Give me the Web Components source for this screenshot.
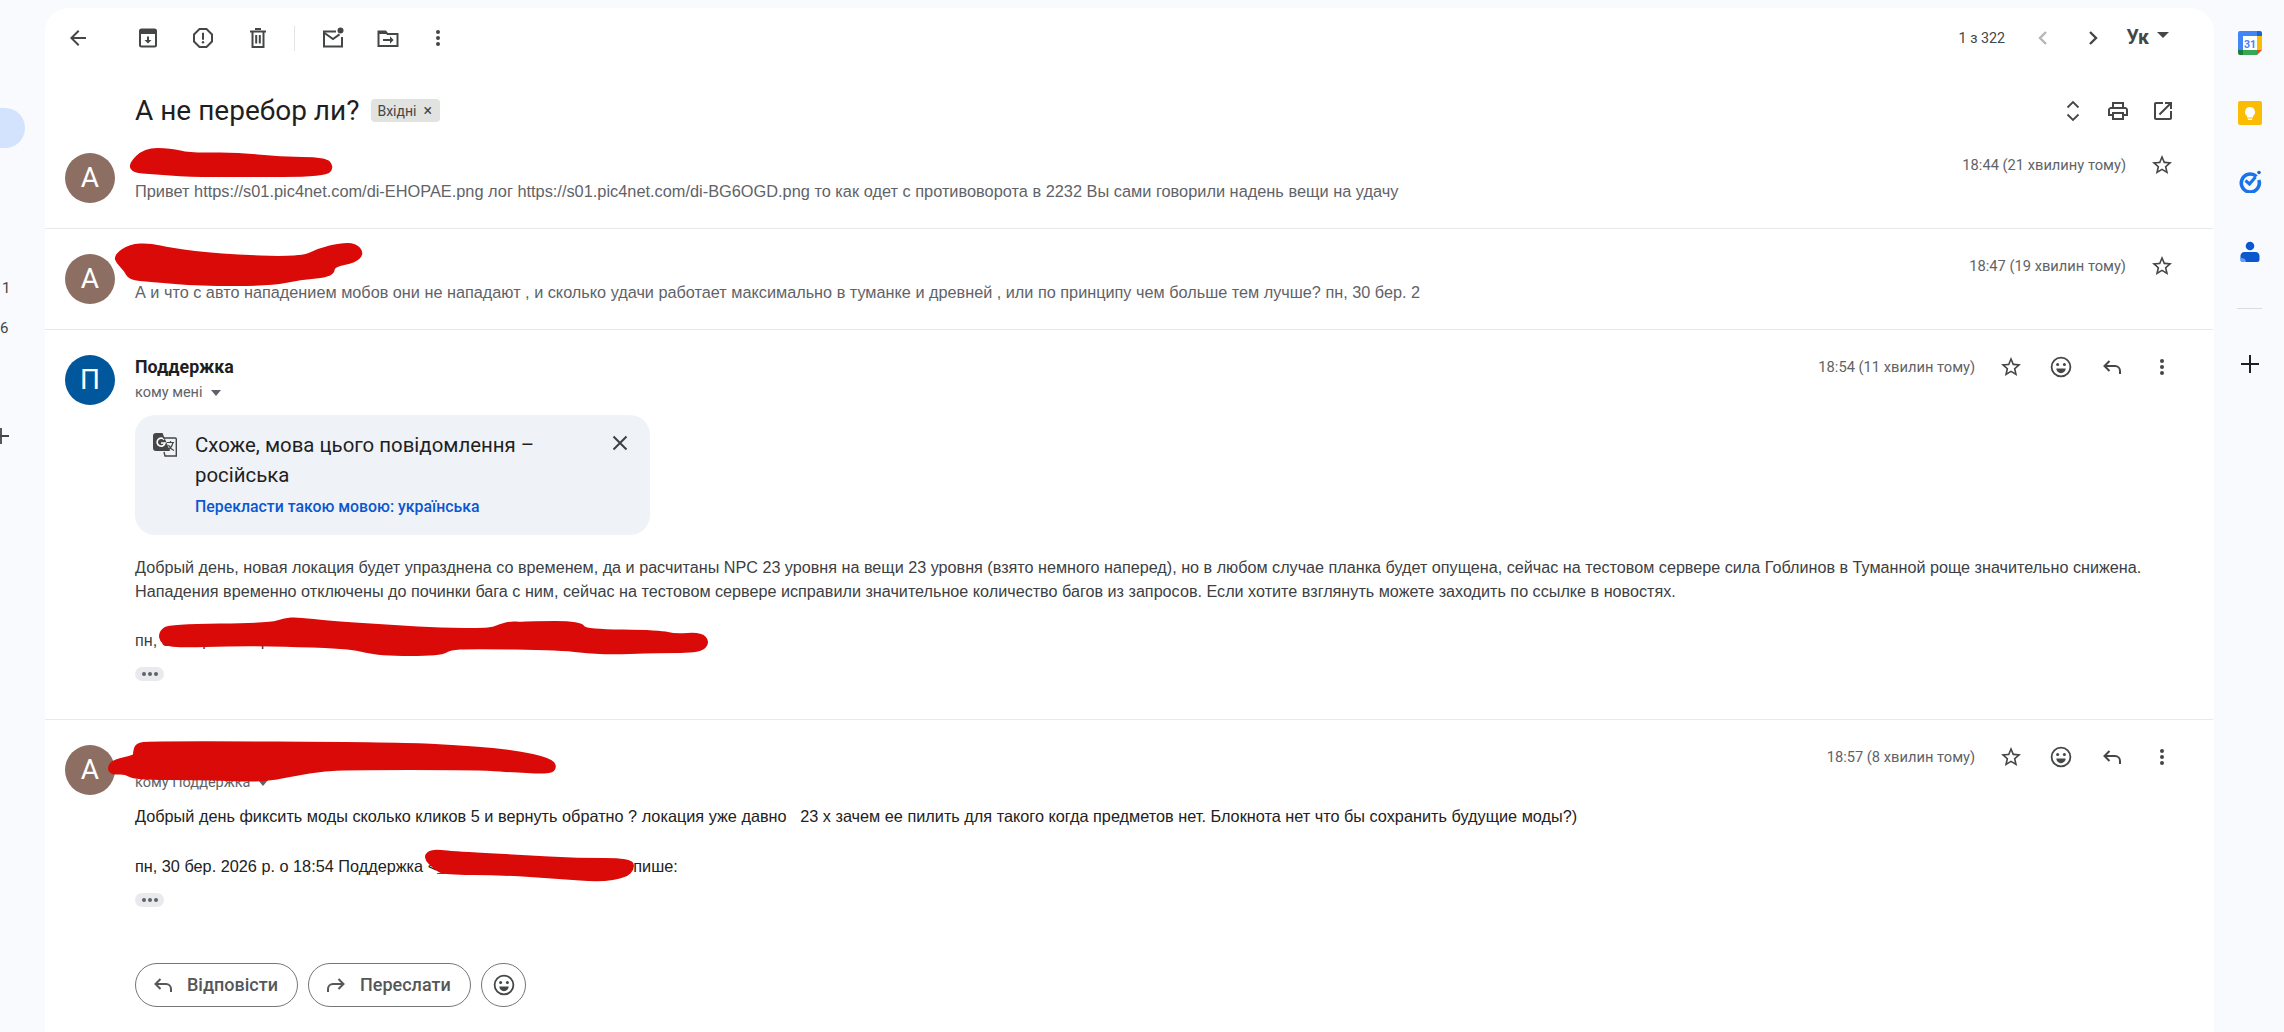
<!DOCTYPE html>
<html lang="uk">
<head>
<meta charset="utf-8">
<title>А не перебор ли?</title>
<style>
  html, body { margin: 0; height: 100%; background: #f8fafd; overflow: hidden; }
</style>
</head>
<body>
<gm-app>
  <gm-nav slot="nav"></gm-nav>

  <gm-toolbar></gm-toolbar>
  <gm-subject>А не перебор ли?</gm-subject>

  <gm-message letter="А" time="18:44 (21 хвилину тому)" collapsed>
    <gm-scribble slot="over" left="85" top="22" width="202" height="25" pts="0,15 15,0 40,0 60,5 105,4 150,9 195,9 202,17 195,25 110,25 60,25 20,22 5,21"></gm-scribble>
    Привет https://s01.pic4net.com/di-EHOPAE.png лог https://s01.pic4net.com/di-BG6OGD.png то как одет с противоворота в 2232 Вы сами говорили надень вещи на удачу
  </gm-message>

  <gm-message letter="А" time="18:47 (19 хвилин тому)" collapsed style="--preview-size: 16.25px">
    <gm-scribble slot="over" left="71" top="16" width="246" height="39" pts="0,11 14,1 34,0 54,5 104,11 184,14 204,5 224,0 239,0 246,8 239,16 217,20 216,30 184,33 154,39 84,39 34,35 14,33 10,25 2,17"></gm-scribble>
    А и что с авто нападением мобов они не нападают , и сколько удачи работает максимально в туманке и древней , или по принципу чем больше тем лучше? пн, 30 бер. 2
  </gm-message>

  <gm-message letter="П" color="#01579b" name="Поддержка" to="кому мені" time="18:54 (11 хвилин тому)">
    <gm-translate-card></gm-translate-card>
    <gm-body top="20" size="16.18">Добрый день, новая локация будет упразднена со временем, да и расчитаны NPC 23 уровня на вещи 23 уровня (взято немного наперед), но в любом случае планка будет опущена, сейчас на тестовом сервере сила Гоблинов в Туманной роще значительно снижена. Нападения временно отключены до починки бага с ним, сейчас на тестовом сервере исправили значительное количество багов из запросов. Если хотите взглянуть можете заходить по ссылке в новостях.</gm-body>
    <gm-body top="25" size="16.18">пн, 30 бер. 2026 р.<gm-gap width="222"></gm-gap><span style="color:#1155cc;text-decoration:underline">&nbsp;&nbsp;&nbsp;&nbsp;&nbsp;</span></gm-body>
    <gm-dots></gm-dots>
    <gm-scribble slot="over" left="116" top="289" width="547" height="35" pts="0,13 9,7 109,6 124,1 136,0 169,4 234,8 279,11 329,11 339,7 351,4 359,5 369,4 419,4 424,12 499,13 514,17 539,15 547,23 539,32 499,32 439,34 399,29 309,28 289,29 279,35 219,35 189,28 139,26 79,25 9,27 0,21"></gm-scribble>
  </gm-message>

  <gm-message letter="А" to="кому Поддержка" time="18:57 (8 хвилин тому)" last>
    <gm-body top="10" dark>Добрый день фиксить моды сколько кликов 5 и вернуть обратно ? локация уже давно &nbsp; 23 х зачем ее пилить для такого когда предметов нет. Блокнота нет что бы сохранить будущие моды?)</gm-body>
    <gm-body top="26" dark>пн, 30 бер. 2026 р. о 18:54 Поддержка &lt;<span style="color:#1155cc;text-decoration:underline">с</span><gm-gap width="188"></gm-gap>пише:</gm-body>
    <gm-dots></gm-dots>
    <gm-reply-bar></gm-reply-bar>
    <gm-scribble slot="over" left="64" top="23" width="446" height="37" pts="26,9 28,2 41,0 291,1 361,5 406,9 441,17 446,24 441,29 411,28 371,25 231,25 201,28 166,35 146,37 91,35 26,35 16,29 3,30 0,24 6,18 26,14"></gm-scribble>
    <gm-scribble slot="over" left="380" top="131" width="208" height="29" pts="0,6 7,0 25,2 95,6 153,9 205,9 208,17 200,25 175,29 135,26 75,22 20,22 10,17"></gm-scribble>
  </gm-message>

  <gm-rail slot="rail"></gm-rail>
</gm-app>

<script>
// all the icon paths in one place, 24 box
const ICONS = {
  back: `<path fill="currentColor" d="M20 11H7.83l5.59-5.59L12 4l-8 8 8 8 1.41-1.41L7.83 13H20v-2z"/>`,
  archive: `<g fill="none" stroke="currentColor" stroke-width="2"><rect x="4" y="3.5" width="16" height="17" rx="1.5"/></g><path fill="currentColor" d="M4 3.5h16V8H4z"/><path fill="currentColor" d="M11 10.5h2v3.5h2.5L12 17.6 8.5 14H11z"/>`,
  report: `<path fill="none" stroke="currentColor" stroke-width="2" d="M8.5 3h7L21 8.5v7L15.5 21h-7L3 15.5v-7z"/><path fill="currentColor" d="M11 6.8h2v7h-2z"/><circle cx="12" cy="16.3" r="1.2" fill="currentColor"/>`,
  trash: `<g fill="none" stroke="currentColor" stroke-width="2"><path d="M6.5 6v15h11V6"/><path d="M4 5.5h16M9 3h6"/><path d="M10.2 9v8.5M13.8 9v8.5"/></g>`,
  unread: `<g fill="none" stroke="currentColor" stroke-width="2"><path d="M15 5.5H3v15h18V11"/><path d="M3.5 7l8.5 6 6.5-4.6"/></g><circle cx="19.5" cy="4.5" r="3" fill="currentColor"/>`,
  move: `<path fill="none" stroke="currentColor" stroke-width="2" d="M2.5 5.5h7l2 2.5h10v12h-19z"/><path fill="currentColor" d="M2.5 5.500h7l2 2.500h-9z"/><path fill="currentColor" d="M7 13h7v-2.800l3.600 3.800-3.600 3.800V15H7z"/>`,
  more: `<g fill="currentColor"><circle cx="12" cy="6" r="2"/><circle cx="12" cy="12" r="2"/><circle cx="12" cy="18" r="2"/></g>`,
  left: `<path fill="none" stroke="currentColor" stroke-width="2.4" d="M15 6l-6 6 6 6"/>`,
  right: `<path fill="none" stroke="currentColor" stroke-width="2.4" d="M9 6l6 6-6 6"/>`,
  unfold: `<path fill="none" stroke="currentColor" stroke-width="1.8" d="M6.5 8.5L12 3l5.5 5.5M6.5 15.5L12 21l5.5-5.5"/>`,
  print: `<path fill="currentColor" d="M19 8h-1V3H6v5H5c-1.66 0-3 1.34-3 3v6h4v4h12v-4h4v-6c0-1.66-1.34-3-3-3zM8 5h8v3H8V5zm8 12v2H8v-4h8v2zm2-2v-2H6v2H4v-4c0-.55.45-1 1-1h14c.55 0 1 .45 1 1v4h-2z"/>`,
  open: `<path fill="currentColor" d="M19 19H5V5h7V3H5c-1.11 0-2 .9-2 2v14c0 1.1.89 2 2 2h14c1.1 0 2-.9 2-2v-7h-2v7zM14 3v2h3.59l-9.83 9.83 1.41 1.41L19 6.41V10h2V3h-7z"/>`,
  star: `<path fill="currentColor" d="M22 9.24l-7.19-.62L12 2 9.19 8.63 2 9.24l5.46 4.73L5.82 21 12 17.27 18.18 21l-1.63-7.03L22 9.24zM12 15.4l-3.76 2.27 1-4.28-3.32-2.88 4.38-.38L12 6.1l1.71 4.04 4.38.38-3.32 2.88 1 4.28L12 15.4z"/>`,
  smile: `<circle cx="12" cy="12" r="9.4" fill="none" stroke="currentColor" stroke-width="1.8"/><circle cx="8.6" cy="9.4" r="1.5" fill="currentColor"/><circle cx="15.4" cy="9.4" r="1.5" fill="currentColor"/><path fill="currentColor" d="M7.3 13.5h9.4a4.7 4.7 0 0 1-9.4 0z"/>`,
  reply: `<path fill="none" stroke="currentColor" stroke-width="2" d="M9.5 6L4.5 11l5 5M4.5 11H15a5 5 0 0 1 5 5v3"/>`,
  forward: `<path fill="none" stroke="currentColor" stroke-width="2" d="M14.5 6l5 5-5 5M19.5 11H9a5 5 0 0 0-5 5v3"/>`,
  close: `<path fill="none" stroke="currentColor" stroke-width="2" d="M5.5 5.5l13 13M18.5 5.5l-13 13"/>`,
  translate: `<path fill="currentColor" d="M3 0h6.5L17 18H3a3 3 0 0 1-3-3V3a3 3 0 0 1 3-3z"/><path fill="none" stroke="#fff" stroke-width="1.6" d="M11.2 6.6A4 4 0 1 0 12 10H8"/><path fill="none" stroke="currentColor" stroke-width="1.4" d="M10 5h12.3a1 1 0 0 1 1 1v17H12l-1-4"/><path fill="none" stroke="currentColor" stroke-width="1.2" d="M14 9.5h7M17.5 8v1.5M20 9.5c-1 4-3 6.5-6 8M15.5 12c1 2.500 3 4.500 5.500 5.500"/>`
};

// plain svg icon, <gm-icon name="star" size="24">
class GmIcon extends HTMLElement {
  connectedCallback() {
    const size = this.getAttribute("size") || 24;
    this.attachShadow({ mode: "open" }).innerHTML = `
      <style>
        :host { display: inline-flex; width: ${size}px; height: ${size}px; flex: none; color: inherit; }
        svg { width: 100%; height: 100%; display: block; }
      </style>
      <svg viewBox="0 0 24 24">${ICONS[this.getAttribute("name")]}</svg>`;
  }
}
customElements.define("gm-icon", GmIcon);

var template_app = document.createElement("template");
template_app.innerHTML = `
<style>
  :host { display: flex; height: 100vh; overflow: hidden; background: #f8fafd; font-family: Roboto, "Liberation Sans", sans-serif; }
  .panel { flex: 1; min-width: 0; margin-top: 8px; background: #fff; border-radius: 24px 24px 0 0; overflow: hidden; }
</style>
<slot name="nav"></slot>
<div class="panel"><slot></slot></div>
<slot name="rail"></slot>
`;
class GmApp extends HTMLElement {
  constructor() {
    super();
    this.attachShadow({ mode: "open" });
  }
  connectedCallback() {
    this.shadowRoot.appendChild(template_app.content.cloneNode(true));
  }
}
customElements.define("gm-app", GmApp);

// what is left of the left sidebar, mostly cut off
var template_nav = document.createElement("template");
template_nav.innerHTML = `
<style>
  :host { display: block; width: 45px; flex: none; overflow: hidden; color: #444746; font: 15px/20px Roboto, sans-serif; }
  .pill { width: 25px; height: 40px; margin-top: 108px; background: #d3e3fd; border-radius: 0 20px 20px 0; }
  .num { padding-left: 2px; height: 20px; }
  .one { margin-top: 130px; }
  .six { margin-top: 20px; padding-left: 0; }
  .plus { margin: 87px 0 0 -10px; }
</style>
<div class="pill"></div>
<div class="num one">1</div>
<div class="num six">6</div>
<div class="plus"><svg width="22" height="22" viewBox="0 0 22 22"><path d="M11 3v16M3 11h16" stroke="#444746" stroke-width="1.8"/></svg></div>
`;
class GmNav extends HTMLElement {
  constructor() { super(); this.attachShadow({ mode: "open" }); }
  connectedCallback() { this.shadowRoot.appendChild(template_nav.content.cloneNode(true)); }
}
customElements.define("gm-nav", GmNav);

var template_toolbar = document.createElement("template");
template_toolbar.innerHTML = `
<style>
  :host { display: flex; align-items: center; height: 60px; padding: 0 45.5px 0 5px; color: #444746; }
  .btn { width: 55px; height: 40px; display: flex; align-items: center; justify-content: center; flex: none; }
  .back { margin-right: 15px; }
  .sep { width: 1px; height: 25px; background: #e3e5e8; margin: 0 10px 0 9px; }
  .short { width: 45px; }
  .count { margin-left: auto; font-size: 14.3px; color: #444746; }
  .pager { width: 24px; display: flex; margin-left: 26px; }
  .prev { color: #b4b6b8; }
  .uk { margin-left: 21.5px; font: 700 19.5px/24px Roboto, sans-serif; color: #444746; }
  .caret { width: 0; height: 0; margin: -6px 0 0 7.5px; border: 6px solid transparent; border-top-color: #444746; border-bottom: 0; }
</style>
<div class="btn back"><gm-icon name="back"></gm-icon></div>
<div class="btn"><gm-icon name="archive"></gm-icon></div>
<div class="btn"><gm-icon name="report"></gm-icon></div>
<div class="btn"><gm-icon name="trash"></gm-icon></div>
<div class="sep"></div>
<div class="btn"><gm-icon name="unread"></gm-icon></div>
<div class="btn"><gm-icon name="move"></gm-icon></div>
<div class="btn short"><gm-icon name="more"></gm-icon></div>
<span class="count">1 з 322</span>
<div class="pager prev"><gm-icon name="left"></gm-icon></div>
<div class="pager"><gm-icon name="right"></gm-icon></div>
<span class="uk">Ук</span>
<div class="caret"></div>
`;
class GmToolbar extends HTMLElement {
  constructor() { super(); this.attachShadow({ mode: "open" }); }
  connectedCallback() { this.shadowRoot.appendChild(template_toolbar.content.cloneNode(true)); }
}
customElements.define("gm-toolbar", GmToolbar);

var template_subject = document.createElement("template");
template_subject.innerHTML = `
<style>
  :host { display: flex; align-items: center; height: 32px; padding: 27px 39px 1px 90px; color: #1f1f1f; }
  h1 { margin: 0; font: 400 28px/32px Roboto, sans-serif; }
  .chip { display: flex; align-items: center; gap: 7px; height: 23px; margin: -1px 0 0 12px; padding: 0 8px 0 6px; background: #e1e3e1; border-radius: 4px; color: #444746; font-size: 14px; }
  .x { font-size: 16px; line-height: 16px; }
  .tools { margin-left: auto; display: flex; gap: 21px; color: #444746; }
</style>
<h1><slot></slot></h1>
<div class="chip"><span>Вхідні</span><span class="x">×</span></div>
<div class="tools">
  <gm-icon name="unfold"></gm-icon>
  <gm-icon name="print"></gm-icon>
  <gm-icon name="open"></gm-icon>
</div>
`;
class GmSubject extends HTMLElement {
  constructor() { super(); this.attachShadow({ mode: "open" }); }
  connectedCallback() { this.shadowRoot.appendChild(template_subject.content.cloneNode(true)); }
}
customElements.define("gm-subject", GmSubject);

var template_message = document.createElement("template");
template_message.innerHTML = `
<style>
  :host { display: flex; position: relative; gap: 20px; padding: 25px 39px 38px 20px; border-bottom: 1px solid #e6e8ec; margin-right: 1px; }
  :host([collapsed]) { padding-bottom: 0; height: 75px; }
  :host([last]) { border-bottom: 0; }
  .avatar { width: 50px; height: 50px; border-radius: 50%; flex: none; display: flex; align-items: center; justify-content: center; color: #fff; font: 400 28px/50px Roboto, sans-serif; background: #8d6e63; }
  .main { flex: 1; min-width: 0; }
  .head { display: flex; justify-content: space-between; align-items: flex-start; height: 25px; }
  .name { font: 700 17.8px/24px Roboto, sans-serif; color: #1f1f1f; }
  .side { display: flex; align-items: center; height: 24px; color: #444746; }
  .time { font-size: 14.7px; color: #5f6368; margin-right: 24px; }
  .side gm-icon + gm-icon { margin-left: 26.3px; }
  .to { display: flex; align-items: center; height: 24px; font-size: 14.5px; color: #5f6368; }
  .to i { margin: 1px 0 0 8px; border: 5px solid transparent; border-top: 6px solid #5f6368; border-bottom: 0; }
  .preview { padding-top: 1px; font: var(--preview-size, 16.35px)/24px "Liberation Sans", Arial, sans-serif; color: #5f6368; white-space: nowrap; }
</style>
<div class="avatar"></div>
<div class="main">
  <div class="head">
    <div class="name"></div>
    <div class="side"><span class="time"></span></div>
  </div>
  <div class="content"><slot></slot></div>
</div>
<slot name="over"></slot>
`;
class GmMessage extends HTMLElement {
  constructor() {
    super();
    this.attachShadow({ mode: "open" });
  }
  connectedCallback() {
    const root = this.shadowRoot;
    root.appendChild(template_message.content.cloneNode(true));
    const avatar = root.querySelector(".avatar");
    avatar.textContent = this.getAttribute("letter");
    if (this.hasAttribute("color")) avatar.style.background = this.getAttribute("color");
    root.querySelector(".name").textContent = this.getAttribute("name") || "";
    root.querySelector(".time").textContent = this.getAttribute("time");

    const side = root.querySelector(".side");
    const names = this.hasAttribute("collapsed") ? ["star"] : ["star", "smile", "reply", "more"];
    names.forEach(n => {
      const icon = document.createElement("gm-icon");
      icon.setAttribute("name", n);
      side.appendChild(icon);
    });

    const content = root.querySelector(".content");
    if (this.hasAttribute("collapsed")) content.classList.add("preview");
    if (this.hasAttribute("to")) {
      const to = document.createElement("div");
      to.className = "to";
      to.innerHTML = `<span>${this.getAttribute("to")}</span><i></i>`;
      content.before(to);
    }
  }
}
customElements.define("gm-message", GmMessage);

var template_card = document.createElement("template");
template_card.innerHTML = `
<style>
  :host { display: flex; box-sizing: border-box; width: 515px; height: 120px; margin-top: 11px; padding: 18px 18px 0 18px; background: #eff2f7; border-radius: 20px; color: #444746; }
  .txt { flex: 1; margin-left: 18px; }
  .msg { font: 400 20.4px/30px Roboto, sans-serif; color: #1f1f1f; margin-top: -3px; }
  .link { margin-top: 7px; font: 500 15.85px/20px Roboto, sans-serif; color: #0b57d0; }
  .close { margin-top: -2px; color: #3c4043; }
</style>
<gm-icon name="translate"></gm-icon>
<div class="txt">
  <div class="msg">Схоже, мова цього повідомлення – російська</div>
  <div class="link">Перекласти такою мовою: українська</div>
</div>
<div class="close"><gm-icon name="close"></gm-icon></div>
`;
class GmTranslateCard extends HTMLElement {
  constructor() { super(); this.attachShadow({ mode: "open" }); }
  connectedCallback() { this.shadowRoot.appendChild(template_card.content.cloneNode(true)); }
}
customElements.define("gm-translate-card", GmTranslateCard);

// one paragraph of mail text
class GmBody extends HTMLElement {
  connectedCallback() {
    const dark = this.hasAttribute("dark");
    const size = this.getAttribute("size") || 16.27;
    this.attachShadow({ mode: "open" }).innerHTML = `
      <style>
        :host { display: block; margin-top: ${this.getAttribute("top") || 0}px; padding-right: 10px; font: ${size}px/24px "Liberation Sans", Arial, sans-serif; color: ${dark ? "#222" : "#3c4043"}; }
      </style>
      <slot></slot>`;
  }
}
customElements.define("gm-body", GmBody);

// the blank left in a quote line where the address is painted over
class GmGap extends HTMLElement {
  connectedCallback() {
    this.attachShadow({ mode: "open" }).innerHTML = `
      <style>:host { display: inline-block; width: ${this.getAttribute("width")}px; height: 1px; }</style>`;
  }
}
customElements.define("gm-gap", GmGap);

class GmDots extends HTMLElement {
  connectedCallback() {
    this.attachShadow({ mode: "open" }).innerHTML = `
      <style>
        :host { display: flex; align-items: center; justify-content: center; gap: 2px; width: 29px; height: 14px; margin-top: 15px; background: #e8eaed; border-radius: 7px; }
        i { width: 4px; height: 4px; border-radius: 50%; background: #5f6368; }
      </style>
      <i></i><i></i><i></i>`;
  }
}
customElements.define("gm-dots", GmDots);

var template_reply = document.createElement("template");
template_reply.innerHTML = `
<style>
  :host { display: flex; gap: 10px; margin-top: 56px; }
  .pill { box-sizing: border-box; width: 163px; height: 44px; display: flex; align-items: center; padding-left: 15px; gap: 12px; border: 1px solid #747775; border-radius: 22px; color: #555759; font: 500 18px/24px Roboto, sans-serif; }
  .round { width: 45px; padding: 0; justify-content: center; color: #444746; }
</style>
<div class="pill"><gm-icon name="reply"></gm-icon>Відповісти</div>
<div class="pill"><gm-icon name="forward"></gm-icon>Переслати</div>
<div class="pill round"><gm-icon name="smile"></gm-icon></div>
`;
class GmReplyBar extends HTMLElement {
  constructor() { super(); this.attachShadow({ mode: "open" }); }
  connectedCallback() { this.shadowRoot.appendChild(template_reply.content.cloneNode(true)); }
}
customElements.define("gm-reply-bar", GmReplyBar);

// red marker that hides names and addresses, sits on top of the message
class GmScribble extends HTMLElement {
  connectedCallback() {
    const a = n => this.getAttribute(n);
    const pts = a("pts").split(" ").map(p => p.split(",").map(Number));
    const mid = (p, q) => `${(p[0] + q[0]) / 2} ${(p[1] + q[1]) / 2}`;
    // smooth the outline: curve through the midpoints, like a felt pen
    let d = `M${mid(pts[pts.length - 1], pts[0])}`;
    pts.forEach((p, i) => { d += ` Q${p[0]} ${p[1]} ${mid(p, pts[(i + 1) % pts.length])}`; });
    this.attachShadow({ mode: "open" }).innerHTML = `
      <style>
        :host { position: absolute; left: ${a("left")}px; top: ${a("top")}px; width: ${a("width")}px; height: ${a("height")}px; }
        svg { display: block; width: 100%; height: 100%; overflow: visible; }
      </style>
      <svg viewBox="0 0 ${a("width")} ${a("height")}"><path d="${d}" fill="#d90a08" stroke="#d90a08" stroke-width="4" stroke-linejoin="round"/></svg>`;
  }
}
customElements.define("gm-scribble", GmScribble);

var template_rail = document.createElement("template");
template_rail.innerHTML = `
<style>
  :host { display: flex; flex-direction: column; align-items: center; box-sizing: border-box; width: 70px; flex: none; padding: 31px 0 0 1px; gap: 46px; }
  svg { display: block; width: 24px; height: 24px; }
  .sep { width: 25px; height: 1px; background: #dadce0; margin: -3px 0 -3px; }
</style>
<svg viewBox="0 0 24 24">
  <path fill="#4285f4" d="M2 0h17v5H5v14H0V2a2 2 0 0 1 2-2z"/>
  <path fill="#1967d2" d="M19 0h3a2 2 0 0 1 2 2v3h-5z"/>
  <path fill="#fbbc04" d="M19 5h5v14h-5z"/>
  <path fill="#34a853" d="M5 19h14v5H5z"/>
  <path fill="#188038" d="M0 19h5v5H2a2 2 0 0 1-2-2z"/>
  <path fill="#ea4335" d="M19 19h5l-5 5z"/>
  <rect x="5" y="5" width="14" height="14" fill="#fff"/>
  <text x="12" y="16.500" text-anchor="middle" font-family="Roboto, sans-serif" font-size="10.500" font-weight="700" fill="#4285f4">31</text>
</svg>
<svg viewBox="0 0 24 24">
  <rect width="24" height="24" rx="2" fill="#fbbc04"/>
  <path fill="#fff" d="M12 6a5 5 0 0 0-3 9v1.500h6V15a5 5 0 0 0-3-9z"/>
  <rect x="9.800" y="17.500" width="4.400" height="1.500" fill="#fff"/>
</svg>
<svg viewBox="0 0 24 24" style="margin-top:-2px;margin-bottom:2px">
  <path fill="none" stroke="#1a73e8" stroke-width="3.600" d="M18.500 7.500A9 9 0 1 0 20.800 11"/>
  <path fill="none" stroke="#1a73e8" stroke-width="3" d="M7.500 11.500l4 3.500 6-7"/>
  <circle cx="21" cy="3.500" r="1.800" fill="#1967d2"/>
</svg>
<svg viewBox="0 0 24 24">
  <circle cx="12" cy="5" r="4.300" fill="#0b57d0"/>
  <path fill="#0b57d0" d="M6.500 11h11c2.500 0 4 2 4 4v3.500a2.500 2.500 0 0 1-2.500 2.500H5a2.500 2.500 0 0 1-2.500-2.500V15c0-2 1.500-4 4-4z"/>
  <path fill="#669df6" d="M2.500 16.500V19A2 2 0 0 0 5 21h3l-1-3z" />
</svg>
<div class="sep"></div>
<svg viewBox="0 0 24 24"><path d="M12 3v18M3 12h18" stroke="#1f1f1f" stroke-width="2"/></svg>
`;
class GmRail extends HTMLElement {
  constructor() { super(); this.attachShadow({ mode: "open" }); }
  connectedCallback() { this.shadowRoot.appendChild(template_rail.content.cloneNode(true)); }
}
customElements.define("gm-rail", GmRail);
</script>
</body>
</html>
